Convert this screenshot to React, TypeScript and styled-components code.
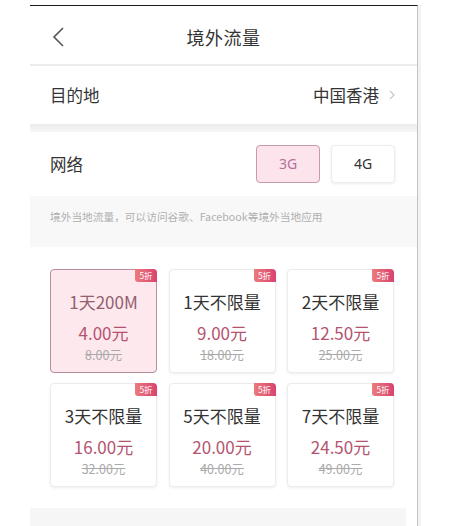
import React from "react";
import styled, { createGlobalStyle } from "styled-components";

const Global = createGlobalStyle`
  html, body { margin: 0; padding: 0; background: #fff; }
  body { font-family: "Noto Sans CJK SC", "Noto Sans", sans-serif; color: #333; }
  * { box-sizing: border-box; }
`;

const Page = styled.div`
  width: 475px;
  height: 526px;
  overflow: hidden;
  padding-top: 5px;
  background: #fff;
`;

const Phone = styled.div`
  margin-left: 30px;
  width: 388px;
  height: 530px;
  border-top: 1.5px solid #1a1a1a;
  border-right: 1px solid #c4c4c4;
  box-shadow: 3px 0 0 #f2f2f2;
  display: flex;
  flex-direction: column;
  background: #fff;
`;

const Header = styled.div`
  height: 60px;
  display: grid;
  grid-template-columns: 1fr auto 1fr;
  align-items: center;
  padding: 3px 20px 0;
  border-bottom: 2px solid #ececec;
`;

const BackBtn = styled.div`
  display: flex;
  align-items: center;
  padding-left: 2px;
`;

const Title = styled.div`
  font-size: 18px;
  line-height: 1;
  color: #333;
  letter-spacing: 0.5px;
`;

const Row = styled.div<{ $h: number }>`
  height: ${(p) => p.$h}px;
  display: flex;
  align-items: center;
  justify-content: space-between;
  padding: 0 20px;
`;

const Label = styled.div`
  font-size: 16.5px;
  line-height: 1;
  color: #333;
`;

const Value = styled.div`
  display: flex;
  align-items: center;
  gap: 10px;
  font-size: 16.5px;
  line-height: 1;
  color: #333;
  padding-right: 2px;
`;

const Gap = styled.div`
  height: 8px;
  background: linear-gradient(to bottom, #ececec, #f6f6f6);
`;

const Segs = styled.div`
  display: flex;
  gap: 11px;
  padding-right: 2px;
`;

const Seg = styled.div<{ $on?: boolean }>`
  width: 64px;
  height: 38px;
  display: flex;
  align-items: center;
  justify-content: center;
  border-radius: 4px;
  font-size: 14px;
  line-height: 1;
  font-family: "Noto Sans", sans-serif;
  color: ${(p) => (p.$on ? "#b4709a" : "#333")};
  background: ${(p) => (p.$on ? "#fde4ec" : "#fff")};
  border: 1px solid ${(p) => (p.$on ? "#c99aab" : "#ededed")};
  box-shadow: ${(p) => (p.$on ? "none" : "0 1px 3px rgba(0,0,0,0.08)")};
`;

const Info = styled.div`
  height: 51px;
  background: #f8f8f8;
  padding: 15px 20px 0;
  font-size: 10.7px;
  line-height: 12px;
  color: #b0b0b0;
  white-space: nowrap;
`;

const Plans = styled.div`
  padding: 22px 20px 0;
  display: grid;
  grid-template-columns: repeat(3, 107px);
  grid-auto-rows: 104px;
  column-gap: 11.5px;
  row-gap: 10px;
`;

const Card = styled.div<{ $on?: boolean }>`
  position: relative;
  border-radius: 4px;
  background: ${(p) => (p.$on ? "#fde8ee" : "#fff")};
  border: 1px solid ${(p) => (p.$on ? "#b98c9a" : "#ececec")};
  box-shadow: ${(p) => (p.$on ? "none" : "0 1px 3px rgba(0,0,0,0.07)")};
  display: flex;
  flex-direction: column;
  align-items: center;
  padding-top: 22px;
`;

const Badge = styled.div`
  position: absolute;
  top: -1px;
  right: -1px;
  width: 22px;
  height: 13px;
  border-radius: 0 4px 0 3px;
  background: linear-gradient(to right, #ec7a7c, #d8436f);
  color: #fff;
  font-size: 8.5px;
  line-height: 13px;
  text-align: center;
`;

const Name = styled.div<{ $on?: boolean }>`
  font-size: 17px;
  line-height: 20px;
  color: ${(p) => (p.$on ? "#92606e" : "#333")};
  white-space: nowrap;
`;

const Price = styled.div`
  margin-top: 12px;
  font-size: 17px;
  line-height: 18px;
  color: #b4536f;
  white-space: nowrap;
`;

const Orig = styled.div`
  margin-top: 6px;
  font-size: 12.5px;
  line-height: 14px;
  color: #aaa;
  text-decoration: line-through;
  white-space: nowrap;
`;

const Bottom = styled.div`
  margin-top: 21px;
  width: 376px;
  height: 20px;
  background: #f6f6f6;
`;

const plans = [
  { name: "1天200M", price: "4.00元", orig: "8.00元", on: true },
  { name: "1天不限量", price: "9.00元", orig: "18.00元" },
  { name: "2天不限量", price: "12.50元", orig: "25.00元" },
  { name: "3天不限量", price: "16.00元", orig: "32.00元" },
  { name: "5天不限量", price: "20.00元", orig: "40.00元" },
  { name: "7天不限量", price: "24.50元", orig: "49.00元" },
];

export default function App() {
  return (
    <>
      <Global />
      <Page>
        <Phone>
          <Header>
            <BackBtn>
              <svg width="14" height="22" viewBox="0 0 14 22">
                <polyline points="11,2 2,11 11,20" fill="none" stroke="#555" strokeWidth="1.6" />
              </svg>
            </BackBtn>
            <Title>境外流量</Title>
            <div />
          </Header>
          <Row $h={58}>
            <Label>目的地</Label>
            <Value>
              中国香港
              <svg width="6" height="10" viewBox="0 0 6 10">
                <polyline points="1,1 5,5 1,9" fill="none" stroke="#c8c8c8" strokeWidth="1.2" />
              </svg>
            </Value>
          </Row>
          <Gap />
          <Row $h={64}>
            <Label>网络</Label>
            <Segs>
              <Seg $on>3G</Seg>
              <Seg>4G</Seg>
            </Segs>
          </Row>
          <Info>境外当地流量，可以访问谷歌、Facebook等境外当地应用</Info>
          <Plans>
            {plans.map((p) => (
              <Card key={p.name} $on={p.on}>
                <Badge>5折</Badge>
                <Name $on={p.on}>{p.name}</Name>
                <Price>{p.price}</Price>
                <Orig>{p.orig}</Orig>
              </Card>
            ))}
          </Plans>
          <Bottom />
        </Phone>
      </Page>
    </>
  );
}
